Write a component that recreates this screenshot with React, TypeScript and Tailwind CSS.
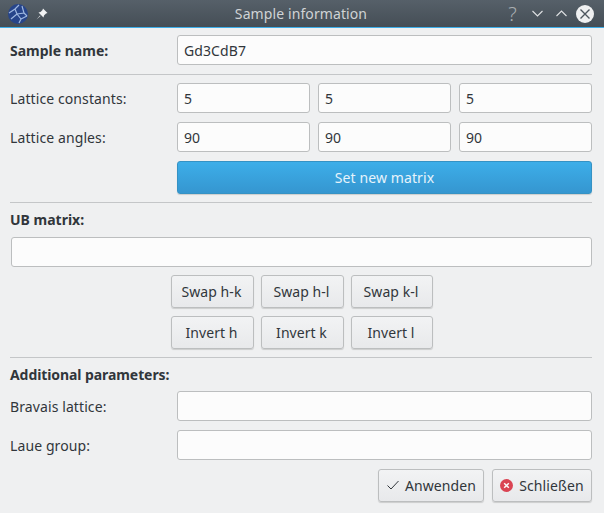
import React from "react";

const Field = ({ value = "", className = "" }: { value?: string; className?: string }) => (
  <div className={`flex h-[30px] items-center rounded-[3px] border border-[#bcbebf] bg-[#fcfcfc] px-[6px] text-[#31363b] ${className}`}>
    {value}
  </div>
);

const Btn = ({ children, className = "" }: { children: React.ReactNode; className?: string }) => (
  <div className={`flex h-[33px] items-center justify-center rounded-[3px] border border-[#bcbebf] bg-gradient-to-b from-[#f2f3f4] to-[#e8e9eb] pb-[1px] text-[#31363b] shadow-[0_1px_1px_rgba(0,0,0,0.15)] ${className}`}>
    {children}
  </div>
);

const Sep = () => <div className="h-px bg-[#c4c6c8]" />;

const Logo = () => (
  <svg width="20" height="20" viewBox="0 0 20 20">
    <circle cx="10" cy="10" r="10" fill="#27458a" />
    <path
      d="M1 9 L7 5 L11 1 M7 5 L9 10 L3 15 M9 10 L16 9 L14 2 M9 10 L13 15 L11 19 M13 15 L19 12 M16 9 L19 12"
      stroke="#9fb8e0"
      strokeWidth="1.2"
      fill="none"
    />
  </svg>
);

export default function App() {
  return (
    <div className="flex h-[513px] w-[604px] flex-col overflow-hidden bg-[#eff0f1] font-['Noto_Sans',sans-serif] text-[14px] leading-[19px] tracking-[0.1px] text-[#31363b]">
      {/* Titelleiste */}
      <div className="flex h-[28px] shrink-0 items-center border-b border-[#3daee9] bg-gradient-to-b from-[#566069] to-[#454e56] pl-[8px] pr-[10px] text-[#d0d3d5]">
        <Logo />
        <svg className="ml-[8px]" width="12" height="12" viewBox="0 0 12 12">
          <path d="M7 0.5 L11.5 5 L10 5.5 L8 7.5 L7.5 9.5 L2.5 4.5 L4.5 4 L6.5 2 Z M4 7.5 L0.5 11.5 L4.5 8 Z" fill="#f2f3f4" />
        </svg>
        <div className="flex-1 pl-[46px] text-center">Sample information</div>
        <div className="flex items-center">
          <span className="mr-[15px] w-[9px] text-center text-[20px] font-light text-[#a9aeb2]">?</span>
          <svg className="mr-[13px]" width="11" height="7" viewBox="0 0 11 7">
            <path d="M0.5 1 L5.5 6 L10.5 1" stroke="#dfe1e3" strokeWidth="1.1" fill="none" />
          </svg>
          <svg className="mr-[9px]" width="11" height="7" viewBox="0 0 11 7">
            <path d="M0.5 6 L5.5 1 L10.5 6" stroke="#dfe1e3" strokeWidth="1.1" fill="none" />
          </svg>
          <svg width="18" height="18" viewBox="0 0 18 18">
            <circle cx="9" cy="9" r="9" fill="#eff0f1" />
            <path d="M4.5 4.5 L13.5 13.5 M13.5 4.5 L4.5 13.5" stroke="#4d565e" strokeWidth="1.4" />
          </svg>
        </div>
      </div>

      <div className="flex flex-1 flex-col pl-[10px] pr-[12px] pt-[7px]">
        <div className="flex items-center">
          <div className="w-[167px] font-bold tracking-normal">Sample name:</div>
          <Field value="Gd3CdB7" className="flex-1" />
        </div>
        <div className="mb-[8px] mt-[9px]"><Sep /></div>

        <div className="flex items-center">
          <div className="w-[167px]">Lattice constants:</div>
          <div className="grid flex-1 grid-cols-3 gap-[8px]">
            <Field value="5" />
            <Field value="5" />
            <Field value="5" />
          </div>
        </div>
        <div className="mt-[9px] flex items-center">
          <div className="w-[167px]">Lattice angles:</div>
          <div className="grid flex-1 grid-cols-3 gap-[8px]">
            <Field value="90" />
            <Field value="90" />
            <Field value="90" />
          </div>
        </div>
        <div className="mt-[9px] pl-[167px]">
          <div className="flex h-[33px] items-center justify-center rounded-[3px] border border-[#3592c4] bg-gradient-to-b from-[#3daee9] to-[#3596d0] text-[#e6f3fb] shadow-[0_1px_1px_rgba(0,0,0,0.15)]">
            Set new matrix
          </div>
        </div>
        <div className="mt-[8px]"><Sep /></div>

        <div className="mt-[7px] font-bold tracking-normal">UB matrix:</div>
        <Field className="ml-px mt-[8px]" />

        <div className="mt-[8px] grid grid-cols-[83px_83px_82px] justify-center gap-x-[7px] gap-y-[8px] pl-[2px] tracking-[0.05px]">
          <Btn className="pr-[2px]">Swap h-k</Btn>
          <Btn className="pr-[2px]">Swap h-l</Btn>
          <Btn className="pr-[2px]">Swap k-l</Btn>
          <Btn className="pr-[2px]">Invert h</Btn>
          <Btn className="pr-[2px]">Invert k</Btn>
          <Btn className="pr-[2px]">Invert l</Btn>
        </div>
        <div className="mt-[8px]"><Sep /></div>

        <div className="mt-[7px] font-bold tracking-[-0.08px]">Additional parameters:</div>
        <div className="mt-[7px] flex items-center">
          <div className="w-[167px]">Bravais lattice:</div>
          <Field className="flex-1" />
        </div>
        <div className="mt-[9px] flex items-center">
          <div className="w-[167px]">Laue group:</div>
          <Field className="flex-1" />
        </div>

        <div className="mt-[9px] flex justify-end gap-[8px]">
          <Btn className="w-[106px] gap-[5px]">
            <svg width="14" height="14" viewBox="0 0 14 14">
              <path d="M1.5 7.5 L5 11 L12.5 3" stroke="#31363b" strokeWidth="1" fill="none" />
            </svg>
            Anwenden
          </Btn>
          <Btn className="w-[100px] gap-[6px]">
            <svg width="13" height="13" viewBox="0 0 14 14">
              <circle cx="7" cy="7" r="7" fill="#da4453" />
              <path d="M4.5 4.5 L9.5 9.5 M9.5 4.5 L4.5 9.5" stroke="#fcfcfc" strokeWidth="1.6" />
            </svg>
            Schließen
          </Btn>
        </div>
      </div>
    </div>
  );
}
